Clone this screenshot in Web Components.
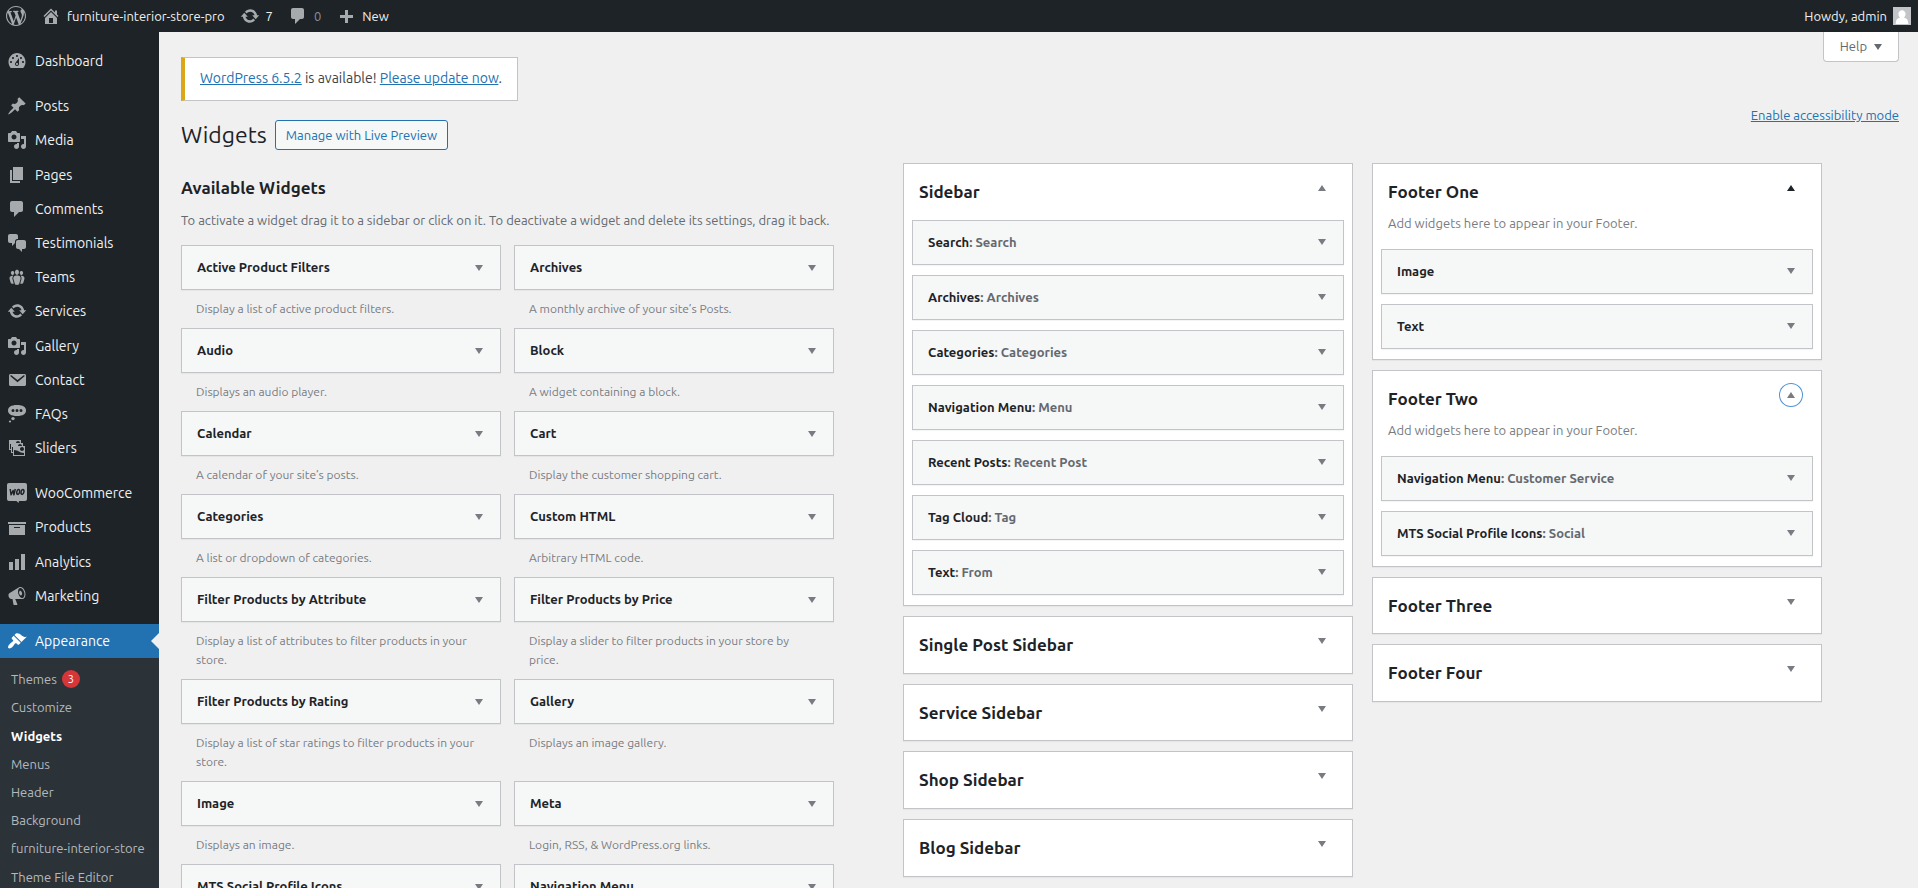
<!DOCTYPE html>
<html lang="en">
<head>
<meta charset="utf-8">
<title>Widgets ‹ furniture-interior-store-pro — WordPress</title>
<style>
  :root {
    --ink: #1d2327;
    --text: #3c434a;
    --muted: #646970;
    --soft: #787c82;
    --line: #c3c4c7;
    --link: #2271b1;
    --canvas: #f0f0f1;
  }
  body {
    margin: 0;
    background: var(--canvas);
    color: var(--text);
    font: 13px/1.4 Ubuntu, "Open Sans", sans-serif;
  }
</style>
</head>
<body>

<wp-layout>
  <wp-adminbar slot="bar"></wp-adminbar>

  <wp-menu slot="menu">
    <wp-menu-item icon="dashboard">Dashboard</wp-menu-item>
    <wp-menu-item icon="pin" separated>Posts</wp-menu-item>
    <wp-menu-item icon="media">Media</wp-menu-item>
    <wp-menu-item icon="page">Pages</wp-menu-item>
    <wp-menu-item icon="comment">Comments</wp-menu-item>
    <wp-menu-item icon="chat">Testimonials</wp-menu-item>
    <wp-menu-item icon="groups">Teams</wp-menu-item>
    <wp-menu-item icon="update">Services</wp-menu-item>
    <wp-menu-item icon="media">Gallery</wp-menu-item>
    <wp-menu-item icon="email">Contact</wp-menu-item>
    <wp-menu-item icon="status">FAQs</wp-menu-item>
    <wp-menu-item icon="images">Sliders</wp-menu-item>
    <wp-menu-item icon="woo" separated>WooCommerce</wp-menu-item>
    <wp-menu-item icon="archive">Products</wp-menu-item>
    <wp-menu-item icon="chart">Analytics</wp-menu-item>
    <wp-menu-item icon="megaphone">Marketing</wp-menu-item>
    <wp-menu-item icon="brush" separated current>Appearance</wp-menu-item>
    <wp-submenu></wp-submenu>
  </wp-menu>

  <wp-page-head></wp-page-head>

  <wp-columns>
    <wp-available slot="available">
      <wp-offer name="Active Product Filters">Display a list of active product filters.</wp-offer>
      <wp-offer name="Archives">A monthly archive of your site’s Posts.</wp-offer>
      <wp-offer name="Audio">Displays an audio player.</wp-offer>
      <wp-offer name="Block">A widget containing a block.</wp-offer>
      <wp-offer name="Calendar">A calendar of your site’s posts.</wp-offer>
      <wp-offer name="Cart">Display the customer shopping cart.</wp-offer>
      <wp-offer name="Categories">A list or dropdown of categories.</wp-offer>
      <wp-offer name="Custom HTML">Arbitrary HTML code.</wp-offer>
      <wp-offer name="Filter Products by Attribute">Display a list of attributes to filter products in your store.</wp-offer>
      <wp-offer name="Filter Products by Price">Display a slider to filter products in your store by price.</wp-offer>
      <wp-offer name="Filter Products by Rating">Display a list of star ratings to filter products in your store.</wp-offer>
      <wp-offer name="Gallery">Displays an image gallery.</wp-offer>
      <wp-offer name="Image">Displays an image.</wp-offer>
      <wp-offer name="Meta">Login, RSS, &amp; WordPress.org links.</wp-offer>
      <wp-offer name="MTS Social Profile Icons"></wp-offer>
      <wp-offer name="Navigation Menu"></wp-offer>
    </wp-available>

    <wp-area name="Sidebar" open>
      <wp-widget name="Search">: Search</wp-widget>
      <wp-widget name="Archives">: Archives</wp-widget>
      <wp-widget name="Categories">: Categories</wp-widget>
      <wp-widget name="Navigation Menu">: Menu</wp-widget>
      <wp-widget name="Recent Posts">: Recent Post</wp-widget>
      <wp-widget name="Tag Cloud">: Tag</wp-widget>
      <wp-widget name="Text">: From</wp-widget>
    </wp-area>
    <wp-area name="Single Post Sidebar"></wp-area>
    <wp-area name="Service Sidebar"></wp-area>
    <wp-area name="Shop Sidebar"></wp-area>
    <wp-area name="Blog Sidebar"></wp-area>

    <wp-area slot="second" name="Footer One" open hovered note="Add widgets here to appear in your Footer.">
      <wp-widget name="Image"></wp-widget>
      <wp-widget name="Text"></wp-widget>
    </wp-area>
    <wp-area slot="second" name="Footer Two" open focused note="Add widgets here to appear in your Footer.">
      <wp-widget name="Navigation Menu">: Customer Service</wp-widget>
      <wp-widget name="MTS Social Profile Icons">: Social</wp-widget>
    </wp-area>
    <wp-area slot="second" name="Footer Three"></wp-area>
    <wp-area slot="second" name="Footer Four"></wp-area>
  </wp-columns>
</wp-layout>

<script>
const ICONS = {
  wordpress: '<path d="M20 10c0-5.51-4.49-10-10-10C4.48 0 0 4.49 0 10c0 5.52 4.48 10 10 10 5.51 0 10-4.48 10-10zM7.78 15.37L4.37 6.22c.55-.02 1.17-.08 1.17-.08.5-.06.44-1.13-.06-1.11 0 0-1.45.11-2.37.11-.18 0-.37 0-.58-.01C4.12 2.69 6.87 1.11 10 1.11c2.33 0 4.45.87 6.05 2.34-.68-.11-1.65.39-1.65 1.58 0 .74.45 1.36.9 2.1.35.61.55 1.36.55 2.46 0 1.49-1.4 5-1.4 5l-3.03-8.37c.54-.02.82-.17.82-.17.5-.05.44-1.25-.06-1.22 0 0-1.44.12-2.38.12-.87 0-2.33-.12-2.33-.12-.5-.03-.56 1.2-.06 1.22l.92.08 1.26 3.41zM17.41 10c.24-.64.74-1.87.43-4.25.7 1.29 1.05 2.71 1.05 4.25 0 3.29-1.73 6.24-4.4 7.78.97-2.59 1.94-5.2 2.92-7.78zM6.1 18.09C3.12 16.65 1.11 13.53 1.11 10c0-1.3.23-2.48.72-3.59C3.25 10.3 4.67 14.2 6.1 18.09zm4.03-6.63l2.58 6.98c-.86.29-1.76.45-2.71.45-.79 0-1.57-.11-2.29-.33.81-2.38 1.62-4.74 2.42-7.1z"/>',
  home: '<path d="M16 8.5l1.53 1.53-1.06 1.06L10 4.6l-6.47 6.49-1.06-1.06L10 2.5l4 4v-2h2v4zm-6-2.46l6 5.99V18H4v-5.97zM12 17v-5H8v5h4z"/>',
  update: '<path d="M10.2 3.28c3.53 0 6.43 2.61 6.92 6h2.08l-3.5 4-3.5-4h2.32c-.45-1.97-2.21-3.45-4.32-3.45-1.45 0-2.73.71-3.54 1.78L4.95 5.66C6.23 4.2 8.11 3.28 10.2 3.28zm-.4 13.44c-3.52 0-6.43-2.61-6.92-6H.8l3.5-4c1.17 1.33 2.33 2.67 3.5 4H5.48c.45 1.97 2.21 3.45 4.32 3.45 1.45 0 2.73-.71 3.54-1.78l1.71 1.95c-1.28 1.46-3.15 2.38-5.25 2.38z"/>',
  comment: '<path d="M5 2h9c1.1 0 2 .9 2 2v7c0 1.1-.9 2-2 2h-2l-5 5v-5H5c-1.1 0-2-.9-2-2V4c0-1.1.9-2 2-2z"/>',
  plus: '<path d="M17 9v3h-5v5H9v-5H4V9h5V4h3v5h5z"/>',
  dashboard: '<path d="M3.76 17h12.48c1.34-1.61 2.26-3.65 2.26-6 0-5-3.8-9-8.5-9S1.5 6 1.5 11c0 2.35.92 4.39 2.26 6zM10 4c.55 0 1 .45 1 1s-.45 1-1 1-1-.45-1-1 .45-1 1-1zM6 6c.55 0 1 .45 1 1s-.45 1-1 1-1-.45-1-1 .45-1 1-1zm8 0c.55 0 1 .45 1 1s-.45 1-1 1-1-.45-1-1 .45-1 1-1zm-5.37 5.55L12 7v6c0 1.1-.9 2-2 2s-2-.9-2-2c0-.57.24-1.08.63-1.45zM4 10c.55 0 1 .45 1 1s-.45 1-1 1-1-.45-1-1 .45-1 1-1zm12 0c.55 0 1 .45 1 1s-.45 1-1 1-1-.45-1-1 .45-1 1-1zm-5 3c0-.55-.45-1-1-1s-1 .45-1 1 .45 1 1 1 1-.45 1-1z"/>',
  pin: '<path d="M10.44 3.02l1.82-1.82 6.36 6.35-1.83 1.82c-1.05-.68-2.48-.57-3.41.36l-.75.75c-.92.93-1.04 2.35-.35 3.41l-1.83 1.82-2.41-2.41-2.8 2.79c-.42.42-3.38 2.71-3.8 2.29s1.86-3.39 2.28-3.81l2.79-2.79L4.1 9.36l1.83-1.82c1.05.69 2.48.57 3.4-.36l.75-.75c.93-.92 1.05-2.35.36-3.41z"/>',
  media: '<path d="M13 11V4c0-.55-.45-1-1-1h-1.67L9 1H5L3.67 3H2c-.55 0-1 .45-1 1v7c0 .55.45 1 1 1h10c.55 0 1-.45 1-1zM7 4.5c1.38 0 2.5 1.12 2.5 2.5S8.38 9.5 7 9.5 4.5 8.38 4.5 7 5.62 4.5 7 4.5zM14 6h5v10.5c0 1.38-1.12 2.5-2.5 2.5S14 17.88 14 16.5s1.12-2.5 2.5-2.5c.17 0 .34.02.5.05V9h-3V6zm-4 8.05V13h2v3.5c0 1.38-1.12 2.5-2.5 2.5S7 17.88 7 16.5 8.12 14 9.5 14c.17 0 .34.02.5.05z"/>',
  page: '<path d="M6 15V2h10v13H6zm-1 1h8v2H3V5h2v11z"/>',
  chat: '<path d="M11 6h-.82C9.07 6 8 7.2 8 8.16V10l-3 3v-3H3c-1.1 0-2-.9-2-2V3c0-1.1.9-2 2-2h6c1.1 0 2 .9 2 2v3zm0 1h6c1.1 0 2 .9 2 2v5c0 1.1-.9 2-2 2h-2v3l-3-3h-1c-1.1 0-2-.9-2-2V9c0-1.1.9-2 2-2z"/>',
  groups: '<path d="M8.03 4.46c-.29 1.28.55 3.46 1.97 3.46 1.41 0 2.25-2.18 1.96-3.46-.22-.98-1.08-1.63-1.96-1.63-.89 0-1.74.65-1.97 1.63zm-4.13.9c-.25 1.08.47 2.93 1.67 2.93s1.92-1.85 1.67-2.93c-.19-.83-.92-1.39-1.67-1.39s-1.48.56-1.67 1.39zm8.86 0c-.25 1.08.47 2.93 1.66 2.93 1.2 0 1.92-1.85 1.67-2.93-.19-.83-.92-1.39-1.67-1.39-.74 0-1.47.56-1.66 1.39zm-.59 11.43l1.25-4.3C14.2 10 12.71 8.47 10 8.47c-2.72 0-4.21 1.53-3.44 4.02l1.26 4.3C8.05 17.51 9 18 10 18c.98 0 1.94-.49 2.17-1.21zm-6.1-7.63c-.49.67-.96 1.83-.42 3.59l1.12 3.79c-.34.2-.77.31-1.2.31-.85 0-1.65-.41-1.85-1.03l-1.07-3.65c-.65-2.11.61-3.4 2.92-3.4.27 0 .54.02.79.06-.1.1-.2.22-.29.33zm8.35-.39c2.31 0 3.58 1.29 2.92 3.4l-1.07 3.65c-.2.62-1 1.03-1.85 1.03-.43 0-.86-.11-1.2-.31l1.11-3.77c.55-1.78.08-2.94-.42-3.61-.08-.11-.18-.23-.28-.33.25-.04.51-.06.79-.06z"/>',
  email: '<path fill-rule="evenodd" d="M3.500 4h14c.8 0 1.500.7 1.500 1.500v9c0 .8-.7 1.500-1.500 1.500h-14C2.700 16 2 15.300 2 14.500v-9C2 4.700 2.700 4 3.500 4zm.2 1.300c-.5.3-.4.8 0 1.200l6.800 5.700 6.800-5.700c.4-.4.500-.9 0-1.200-.3-.2-.7-.1-1 .1l-5.800 4.700-5.800-4.700c-.3-.2-.7-.3-1-.1z"/>',
  status: '<path fill-rule="evenodd" d="M10 1c6 0 9 2.200 9 5.500S16 12 10 12 1 9.800 1 6.500 4 1 10 1zM6 5a1.500 1.500 0 1 0 0 3 1.500 1.500 0 0 0 0-3zm4 0a1.500 1.500 0 1 0 0 3 1.500 1.500 0 0 0 0-3zm4 0a1.500 1.500 0 1 0 0 3 1.500 1.500 0 0 0 0-3z"/><circle cx="6" cy="14.600" r="1.700"/><circle cx="3" cy="17.500" r="1.100"/>',
  images: '<path fill-rule="evenodd" d="M4 15v-3H2V2h12v3h2v3h2v10H6v-3H4zm7-12c-1.100 0-2 .9-2 2h4c0-1.100-.89-2-2-2zm-7 8V6H3v5h1zm7-3h4c0-1.100-.89-2-2-2-1.100 0-2 .9-2 2zm-5 6V9H5v5h1zm9-1c1.100 0 2-.89 2-2 0-1.100-.9-2-2-2s-2 .9-2 2c0 1.110.9 2 2 2zm2 4v-2c-5 0-5-3-10-3v5h10z"/>',
  woo: '<path d="M2 0h16c1.200 0 2 .8 2 2v14c0 1.200-.8 2-2 2h-6l-.5 2-2-2H2c-1.200 0-2-.8-2-2V2C0 .8.800 0 2 0z"/><path d="M3.200 6l.9 5.800 2-4.300.8 4.300L8.300 6" fill="none" stroke="#1d2327" stroke-width="1.500" stroke-linejoin="round"/><g fill="none" stroke="#1d2327" stroke-width="1.500"><ellipse cx="11.200" cy="8.900" rx="1.400" ry="2.500" transform="rotate(12 11.200 8.900)"/><ellipse cx="15.500" cy="8.900" rx="1.400" ry="2.500" transform="rotate(12 15.500 8.900)"/></g>',
  archive: '<path d="M19 4v2H1V4h18zM2 7h16v10H2V7zm11 3V9H7v1h6z"/>',
  chart: '<path d="M18 18V2h-4v16h4zm-6 0V7H8v11h4zm-6 0v-8H2v8h4z"/>',
  megaphone: '<path d="M18.150 5.940c.46 1.620.38 3.220-.02 4.480-.42 1.280-1.260 2.180-2.300 2.480-.16.06-.26.06-.4.06-.06.02-.12.02-.18.02-.06.02-.14.02-.22.02h-6.800l2.220 5.500c.02.14-.06.26-.14.34-.08.1-.24.16-.34.16H6.950c-.1 0-.26-.06-.34-.16-.08-.08-.16-.2-.14-.34l-1-5.500H4.250l-.02-.02c-.5.06-1.080-.18-1.540-.62s-.88-1.080-1.060-1.880c-.24-.8-.2-1.560-.02-2.200.18-.62.58-1.080 1.060-1.300l.02-.02 9-5.400c.1-.06.18-.1.24-.16.06-.04.14-.08.24-.12.16-.08.28-.12.5-.18 1.040-.3 2.240.1 3.220.98s1.840 2.240 2.260 3.860zm-2.580 5.980h-.02c.4-.1.74-.34 1.040-.7.58-.7.86-1.760.86-3.040 0-.64-.1-1.300-.28-1.980-.34-1.360-1.020-2.500-1.780-3.240s-1.680-1.100-2.460-.88c-.82.22-1.400.96-1.700 2-.32 1.040-.28 2.360.06 3.720.38 1.360 1 2.500 1.800 3.240.78.74 1.620 1.100 2.480.88zm-2.540-7.080c.22-.04.42-.02.62.04.38.16.76.48 1.020 1s.42 1.200.42 1.780c0 .3-.04.56-.12.8-.18.48-.44.84-.86.94-.34.1-.8-.06-1.140-.4s-.64-.86-.78-1.500c-.18-.62-.12-1.240.02-1.720s.48-.84.82-.94z"/>',
  brush: '<path d="M14.480 11.060L7.410 3.990l1.500-1.500c.5-.56 2.300-.47 3.510.32 1.210.8 1.430 1.280 2.910 2.100 1.180.64 2.450 1.260 4.450.85zm-.71.71L6.700 4.700 4.930 6.470c-.39.39-.39 1.020 0 1.410l1.060 1.060c.39.39.39 1.030 0 1.420-.6.6-1.430 1.110-2.210 1.690-.35.26-.7.53-1.010.84C1.430 14.230.4 16.080 1.400 17.070c.99 1 2.840-.03 4.180-1.360.31-.31.58-.66.85-1.020.57-.78 1.080-1.610 1.690-2.210.39-.39 1.020-.39 1.410 0l1.060 1.060c.39.39 1.020.39 1.410 0z"/>',
  down: '<path d="M6 7h8l-4 6z"/>',
  up: '<path d="M6 13h8l-4-6z"/>',
  avatar: '<path fill="#c3c4c7" d="M0 0h20v20H0z"/><path fill="#fff" d="M10 3.500c2.300 0 4 1.900 4 4.300 0 1.700-.8 3.200-2 3.900 3.200.6 4.800 2.800 5 6.300v1H3v-1c.2-3.500 1.800-5.700 5-6.300-1.200-.7-2-2.200-2-3.900 0-2.400 1.700-4.300 4-4.300z"/>'
};

const define = (tag, render) => customElements.define(tag, class extends HTMLElement {
  connectedCallback() {
    if (this.shadowRoot) return;
    const root = this.attachShadow({ mode: 'open' });
    const template = document.createElement('template');
    template.innerHTML = render(this);
    root.append(template.content.cloneNode(true));
  }
});

define('wp-icon', el => `
  <style>
    :host { display: block; flex: none; width: 20px; height: 20px; }
    svg { display: block; width: 100%; height: 100%; fill: currentColor; }
  </style>
  <svg viewBox="0 0 20 20" aria-hidden="true">${ICONS[el.getAttribute('name')]}</svg>`);

define('wp-layout', () => `
  <style>
    :host { display: grid; grid-template: 32px auto / 159px minmax(0, 1fr); min-height: 100vh; }
    .bar { grid-column: 1 / -1; }
    main { padding: 0 19px 24px 22px; }
  </style>
  <header class="bar"><slot name="bar"></slot></header>
  <slot name="menu"></slot>
  <main><slot></slot></main>`);

define('wp-adminbar', () => `
  <style>
    :host { display: flex; justify-content: space-between; height: 32px; padding: 0 7px 0 6px;
            background: var(--ink); color: #f0f0f1; }
    nav { display: flex; }
    a { display: flex; align-items: center; gap: 6px; color: inherit; text-decoration: none; line-height: 32px; }
    .left { gap: 15px; }
    wp-icon { color: #a7aaad; }
    .dim { color: #8c8f94; }
    .avatar { width: 18px; height: 18px; }
  </style>
  <nav class="left" aria-label="Toolbar">
    <a href="#" aria-label="About WordPress"><wp-icon name="wordpress"></wp-icon></a>
    <a href="#"><wp-icon name="home"></wp-icon>furniture-interior-store-pro</a>
    <a href="#"><wp-icon name="update"></wp-icon>7</a>
    <a href="#" class="dim"><wp-icon name="comment"></wp-icon>0</a>
    <a href="#"><wp-icon name="plus"></wp-icon>New</a>
  </nav>
  <nav aria-label="Account"><a href="#">Howdy, admin<wp-icon class="avatar" name="avatar"></wp-icon></a></nav>`);

define('wp-menu', () => `
  <style>
    :host { display: block; background: var(--ink); }
    nav { padding-top: 12px; }
  </style>
  <nav aria-label="Main menu"><slot></slot></nav>`);

define('wp-menu-item', el => `
  <style>
    :host { display: block; font-size: 14px; line-height: 1.3; color: #f0f0f1; }
    :host([separated]) { margin-top: 11px; }
    a { position: relative; display: flex; align-items: center; gap: 8px; padding: 8px 7px; color: inherit; text-decoration: none; }
    wp-icon { color: #a7aaad; margin: -1px 0; }
    :host([current]) a { background: var(--link); color: #fff; }
    :host([current]) wp-icon { color: #fff; }
    :host([current]) a::after { content: ""; position: absolute; right: 0; top: 50%; margin-top: -8px;
      border: 8px solid transparent; border-right-color: var(--canvas); border-left-width: 0; }
  </style>
  <a href="#"><wp-icon name="${el.getAttribute('icon')}"></wp-icon><slot></slot></a>`);

define('wp-submenu', () => `
  <style>
    :host { display: block; background: #2c3338; color: #b3b9be; }
    ul { list-style: none; margin: 0; padding: 7px 0; }
    a { display: flex; align-items: center; gap: 5px; padding: 5px 11px; color: inherit; text-decoration: none; white-space: nowrap; }
    .current { color: #fff; font-weight: 600; }
    .badge { width: 18px; height: 18px; border-radius: 9px; background: #d63638; color: #fff;
             font-size: 11px; line-height: 18px; text-align: center; }
  </style>
  <ul>
    <li><a href="#">Themes <span class="badge">3</span></a></li>
    <li><a href="#">Customize</a></li>
    <li><a href="#" class="current" aria-current="page">Widgets</a></li>
    <li><a href="#">Menus</a></li>
    <li><a href="#">Header</a></li>
    <li><a href="#">Background</a></li>
    <li><a href="#">furniture-interior-store</a></li>
    <li><a href="#">Theme File Editor</a></li>
  </ul>`);

define('wp-page-head', () => `
  <style>
    :host { display: flex; justify-content: space-between; align-items: flex-start; }
    a { color: var(--link); }
    .notice { width: fit-content; margin: 25px 0 19px; padding: 11px 15px 12px; border: 1px solid var(--line);
              border-left: 4px solid #dba617; background: #fff; font-size: 14px; line-height: 19px; }
    .title { display: flex; align-items: center; gap: 8px; }
    h1 { margin: 0; color: var(--ink); font-size: 23px; font-weight: 400; line-height: 30px; }
    .action { padding: 0 10px; border: 1px solid var(--link); border-radius: 3px; background: #f6f7f7;
              line-height: 28px; text-decoration: none; }
    .side { display: flex; flex-direction: column; align-items: flex-end; gap: 44px; }
    .help { display: flex; align-items: center; gap: 1px; height: 30px; padding: 0 10px 0 16px; border: 1px solid var(--line);
            border-top: 0; border-radius: 0 0 4px 4px; background: #fff; color: var(--muted); font: inherit; }
  </style>
  <div>
    <div class="notice"><a href="#">WordPress 6.5.2</a> is available! <a href="#">Please update now</a>.</div>
    <div class="title"><h1>Widgets</h1><a class="action" href="#">Manage with Live Preview</a></div>
  </div>
  <div class="side">
    <button class="help" type="button">Help<wp-icon name="down"></wp-icon></button>
    <a href="#">Enable accessibility mode</a>
  </div>`);

define('wp-columns', () => `
  <style>
    :host { display: grid; grid-template-columns: 653fr 919fr; column-gap: 69px; align-items: start;
            padding: 13px 77px 0 0; }
    .areas { display: grid; grid-template-columns: 1fr 1fr; column-gap: 19px; align-items: start; }
    .stack { display: grid; gap: 10px; }
  </style>
  <slot name="available"></slot>
  <div class="areas">
    <div class="stack"><slot></slot></div>
    <div class="stack"><slot name="second"></slot></div>
  </div>`);

define('wp-available', () => `
  <style>
    :host { display: block; }
    h2 { margin: 0; padding-top: 13px; color: var(--ink); font-size: 17px; font-weight: 600; line-height: 24px; }
    p { margin: 11px 0 15px; color: var(--muted); line-height: 19px; }
    .list { display: grid; grid-template-columns: 1fr 1fr; column-gap: 13px; }
  </style>
  <h2>Available Widgets</h2>
  <p>To activate a widget drag it to a sidebar or click on it. To deactivate a widget and delete its settings, drag it back.</p>
  <div class="list"><slot></slot></div>`);

define('wp-widget', el => `
  <style>
    :host { display: flex; align-items: center; justify-content: space-between; box-sizing: border-box; height: 45px;
            padding: 0 11px 0 15px; border: 1px solid var(--line); background: #f6f7f7; box-shadow: 0 1px 1px rgba(0, 0, 0, .04); }
    h3 { margin: 0; color: var(--ink); font-size: 13px; font-weight: 600; line-height: 19px; }
    span { color: var(--muted); }
    button { padding: 0; border: 0; background: none; color: var(--soft); }
  </style>
  <h3>${el.getAttribute('name')}<span><slot></slot></span></h3>
  <button type="button" aria-label="Edit widget: ${el.getAttribute('name')}"><wp-icon name="down"></wp-icon></button>`);

define('wp-offer', el => `
  <style>
    :host { display: block; }
    p { margin: 0; padding: 9px 15px 10px; color: var(--soft); font-size: 12px; line-height: 19px; }
  </style>
  <wp-widget name="${el.getAttribute('name')}"></wp-widget>
  <p><slot></slot></p>`);

define('wp-area', el => `
  <style>
    :host { display: block; border: 1px solid var(--line); background: #fff; box-shadow: 0 1px 1px rgba(0, 0, 0, .04); }
    header { display: flex; align-items: flex-start; justify-content: space-between; padding: 0 18px 0 15px; }
    h2 { margin: 0; padding: 16px 0; color: var(--ink); font-size: 17px; font-weight: 600; line-height: 1.4; }
    :host([note]) h2 { padding-bottom: 10px; }
    button { margin-top: 12px; padding: 2px; border: 0; border-radius: 12px; background: none; color: var(--soft); }
    :host([hovered]) button { color: var(--ink); }
    :host([focused]) button { box-shadow: inset 0 0 0 1px #4f94d4; }
    p { margin: 0; padding: 0 15px 16px; color: var(--soft); line-height: 19px; }
    .items { display: grid; gap: 10px; padding: 0 8px 10px; }
  </style>
  <header><h2>${el.getAttribute('name')}</h2>
    <button type="button" aria-label="Toggle ${el.getAttribute('name')}"><wp-icon name="${el.hasAttribute('open') ? 'up' : 'down'}"></wp-icon></button></header>
  ${el.hasAttribute('note') ? `<p>${el.getAttribute('note')}</p>` : ''}
  ${el.hasAttribute('open') ? '<div class="items"><slot></slot></div>' : ''}`);
</script>
</body>
</html>
